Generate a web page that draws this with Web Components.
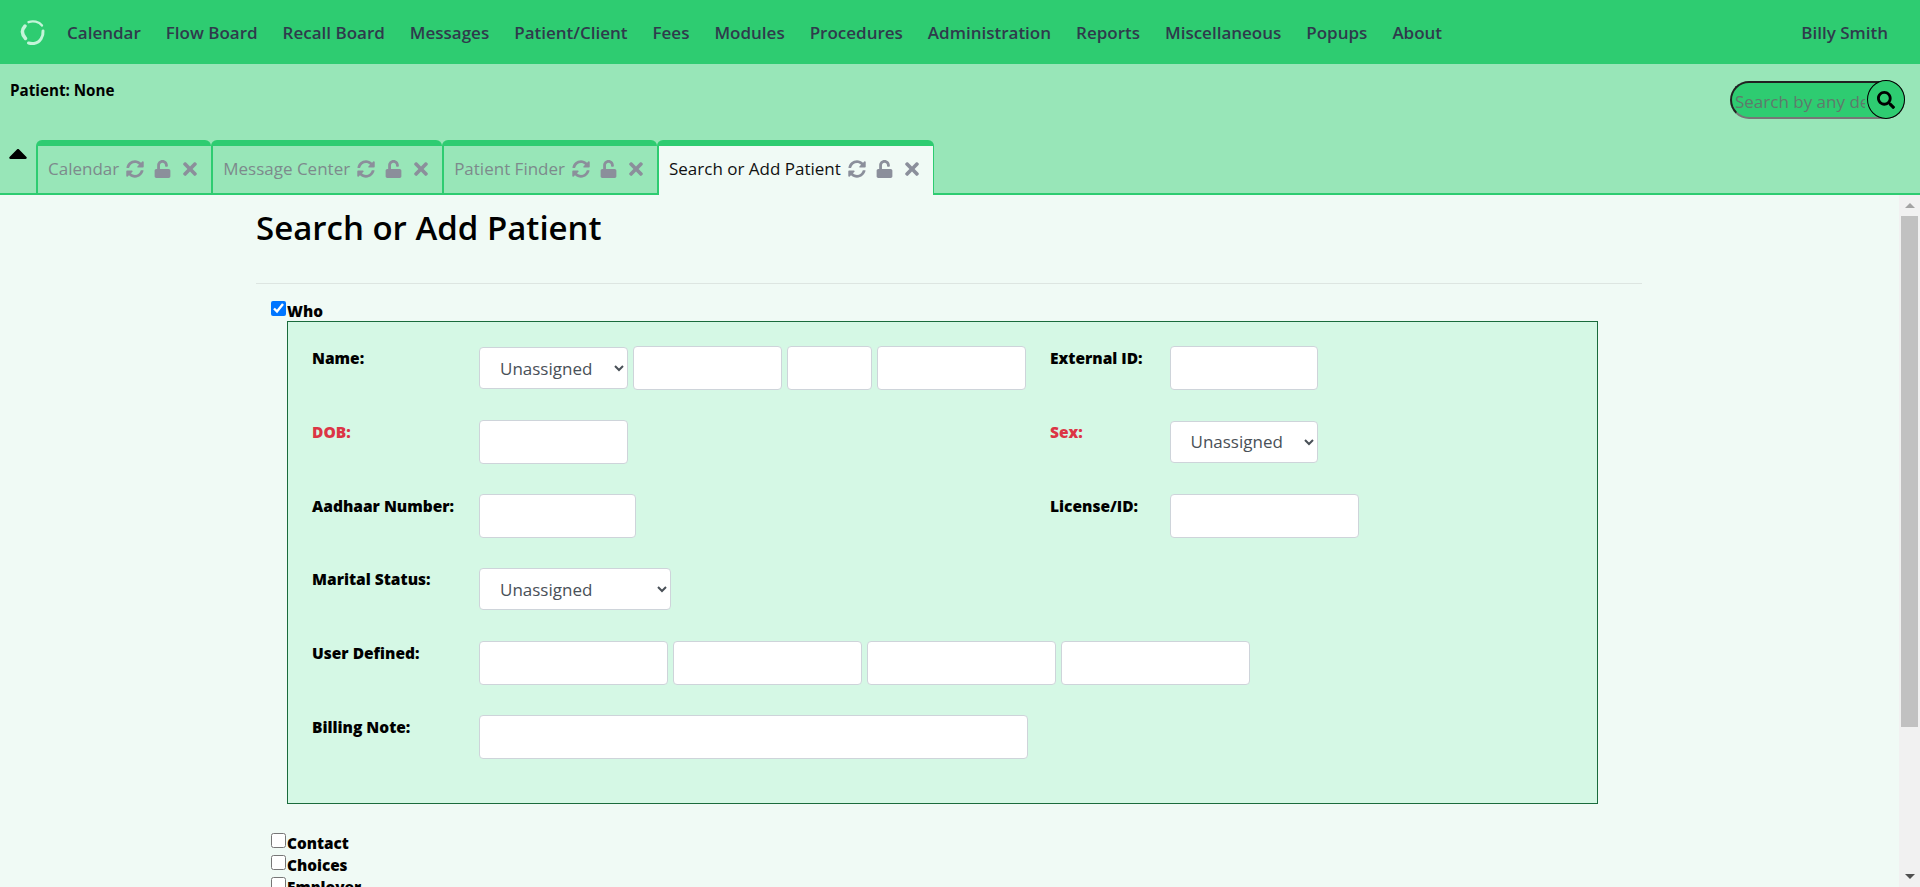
<!doctype html>
<html>
<head>
<meta charset="utf-8">
<title>Search or Add Patient</title>
<style>
  html, body { margin: 0; height: 100%; overflow: hidden; }
  body { font-family: "Open Sans", "Noto Sans", sans-serif; }
</style>
</head>
<body>
<emr-app></emr-app>

<script>
const ICONS = {
  sync: ['0 0 512 512', 'M370.72 133.28C339.458 104.008 298.888 87.962 255.848 88c-77.458.068-144.328 53.178-162.791 126.85-1.344 5.363-6.122 9.15-11.651 9.15H24.103c-7.498 0-13.194-6.807-11.807-14.176C33.933 94.924 134.813 8 256 8c66.448 0 126.791 26.136 171.315 68.685L463.03 40.97C478.149 25.851 504 36.559 504 57.941V192c0 13.255-10.745 24-24 24H345.941c-21.382 0-32.09-25.851-16.971-40.971l41.75-41.749zM32 296h134.059c21.382 0 32.09 25.851 16.971 40.971l-41.75 41.75c31.262 29.273 71.835 45.319 114.876 45.28 77.418-.07 144.315-53.144 162.787-126.849 1.344-5.363 6.122-9.15 11.651-9.15h57.304c7.498 0 13.194 6.807 11.807 14.176C478.067 417.076 377.187 504 256 504c-66.448 0-126.791-26.136-171.315-68.685L48.97 471.03C33.851 486.149 8 475.441 8 454.059V320c0-13.255 10.745-24 24-24z'],
  unlock: ['0 0 448 512', 'M400 256H152V152.9c0-39.6 31.7-72.5 71.3-72.9 40-.4 72.7 32.1 72.7 72v16c0 13.3 10.7 24 24 24h32c13.3 0 24-10.7 24-24v-16C376 68 307.5-.3 223.5 0 139.5.3 72 69.5 72 153.5V256H48c-26.5 0-48 21.5-48 48v160c0 26.5 21.5 48 48 48h352c26.5 0 48-21.5 48-48V304c0-26.5-21.5-48-48-48z'],
  times: ['0 0 352 512', 'M242.72 256l100.07-100.07c12.28-12.28 12.28-32.19 0-44.48l-22.24-22.24c-12.28-12.28-32.19-12.28-44.48 0L176 189.28 75.93 89.21c-12.28-12.28-32.19-12.28-44.48 0L9.21 111.45c-12.28 12.28-12.28 32.19 0 44.48L109.28 256 9.21 356.07c-12.28 12.28-12.28 32.19 0 44.48l22.24 22.24c12.28 12.28 32.2 12.28 44.48 0L176 322.72l100.07 100.07c12.28 12.28 32.2 12.28 44.48 0l22.24-22.24c12.28-12.28 12.28-32.19 0-44.48L242.72 256z'],
  search: ['0 0 512 512', 'M505 442.7L405.3 343c-4.5-4.5-10.6-7-17-7H372c27.6-35.3 44-79.7 44-128C416 93.1 322.9 0 208 0S0 93.1 0 208s93.1 208 208 208c48.3 0 92.7-16.4 128-44v16.3c0 6.4 2.5 12.5 7 17l99.7 99.7c9.4 9.4 24.6 9.4 33.9 0l28.3-28.3c9.4-9.4 9.4-24.6.1-34zM208 336c-70.7 0-128-57.2-128-128 0-70.7 57.2-128 128-128 70.7 0 128 57.2 128 128 0 70.7-57.2 128-128 128z'],
  caret: ['12 183 296 169', 'M288.662 352H31.338c-17.818 0-26.741-21.543-14.142-34.142l128.662-128.662c7.81-7.81 20.474-7.81 28.284 0l128.662 128.662c12.6 12.599 3.676 34.142-14.142 34.142z']
}

const icon = (name, w, h) => {
  const [box, d] = ICONS[name]
  return `<svg viewBox="${box}" width="${w}" height="${h}" fill="currentColor" aria-hidden="true"><path d="${d}"/></svg>`
}

class EmrNavbar extends HTMLElement {
  connectedCallback() {
    const items = ['Calendar', 'Flow Board', 'Recall Board', 'Messages', 'Patient/Client', 'Fees', 'Modules', 'Procedures', 'Administration', 'Reports', 'Miscellaneous', 'Popups', 'About']
    this.attachShadow({ mode: 'open' }).innerHTML = `
      <style>
        :host {
          display: flex;
          align-items: center;
          height: 64px;
          background: #2ecc71;
          color: #2f3b4c;
          font: 600 17px/24px "Open Sans", sans-serif;
          box-sizing: border-box;
          padding: 1px 32px 0 18px;
        }
        svg { display: block; flex: none; margin: -1px 21px 0 0; }
        nav { display: flex; gap: 25px; flex: 1; }
        span { white-space: nowrap; }
      </style>
      <svg width="28" height="28" viewBox="0 0 28 28" fill="none" stroke="#c4f4d9" stroke-linecap="round">
        <path d="M7 8Q1.5 14 7.5 20.5" stroke-width="3.4"/>
        <path d="M10.5 4.2C15 2.5 21 3.5 24 7.5" stroke-width="2.3"/>
        <path d="M25 13C25.5 18 22.5 24.5 16 25.4C14 25.7 12.3 25.5 10.5 25" stroke-width="3"/>
      </svg>
      <nav>${items.map(i => `<span>${i}</span>`).join('')}</nav>
      <span>Billy Smith</span>
    `
  }
}

class EmrSearch extends HTMLElement {
  connectedCallback() {
    this.attachShadow({ mode: 'open' }).innerHTML = `
      <style>
        :host { display: flex; position: relative; width: 175px; height: 39px; }
        input {
          width: 100%;
          height: 38px;
          margin: 1px 0 0;
          box-sizing: border-box;
          padding: 4px 38px 1px 3px;
          border: 2px inset #767676;
          border-radius: 19px;
          background: #2ecc71;
          font: 17px "Open Sans", sans-serif;
          outline: none;
        }
        input::placeholder { color: #5f7a6c; opacity: 1; }
        button {
          position: absolute;
          right: 0;
          top: 0;
          width: 38px;
          height: 39px;
          padding: 0;
          display: grid;
          place-items: center;
          border: 1px solid #000;
          border-radius: 50%;
          background: #2ecc71;
          color: #000;
        }
      </style>
      <input placeholder="Search by any demographics">
      <button type="button" aria-label="Search">${icon('search', 18, 18)}</button>
    `
  }
}

class EmrTab extends HTMLElement {
  connectedCallback() {
    const active = this.hasAttribute('active')
    this.attachShadow({ mode: 'open' }).innerHTML = `
      <style>
        :host {
          display: flex;
          align-items: center;
          box-sizing: border-box;
          height: 55px;
          margin-bottom: -2px;
          padding: 0 14px 4px 10px;
          border-top: 6px solid #2ecc71;
          border-left: 2px solid #2ecc71;
          border-radius: 6px 6px 0 0;
          font: 17px/24px "Open Sans", sans-serif;
          white-space: nowrap;
          color: ${active ? '#111' : '#7d8a8c'};
          background: ${active ? '#f0faf5' : 'transparent'};
          ${active ? 'border-right: 1px solid #2ecc71;' : ''}
        }
        .tools { display: flex; align-items: center; color: #8b8f9b; margin-left: 7px; }
        svg { display: block; }
        .lock { margin-left: 10px; }
        .close { margin-left: 12px; }
      </style>
      <slot></slot>
      <div class="tools">
        ${icon('sync', 18, 18)}
        <span class="lock">${icon('unlock', 17, 18)}</span>
        <span class="close">${icon('times', 14, 20)}</span>
      </div>
    `
  }
}

class EmrTabbar extends HTMLElement {
  connectedCallback() {
    this.attachShadow({ mode: 'open' }).innerHTML = `
      <style>
        :host {
          display: block;
          height: 131px;
          box-sizing: border-box;
          background: #98e6b8;
          border-bottom: 2px solid #2ecc71;
          position: relative;
        }
        .top {
          display: flex;
          justify-content: space-between;
          height: 76px;
          padding: 16px 15px 0 10px;
          box-sizing: border-box;
        }
        .patient { font: 700 15.2px/21px "Open Sans", sans-serif; color: #000; }
        .tabs { display: flex; align-items: flex-end; height: 53px; padding-left: 9px; }
        .caret { align-self: flex-start; margin: 9px 9px 0 0; color: #000; line-height: 0; }
      </style>
      <div class="top">
        <div class="patient">Patient: None</div>
        <emr-search></emr-search>
      </div>
      <div class="tabs">
        <div class="caret">${icon('caret', 18, 10)}</div>
        <slot></slot>
      </div>
    `
  }
}

class EmrField extends HTMLElement {
  connectedCallback() {
    const required = this.hasAttribute('required')
    this.attachShadow({ mode: 'open' }).innerHTML = `
      <style>
        :host { display: block; font: 800 15.5px/21px "Open Sans", sans-serif; color: ${required ? '#dc3545' : '#000'}; padding-top: 2px; }
      </style>
      <slot></slot>
    `
  }
}

class EmrInput extends HTMLElement {
  connectedCallback() {
    const width = this.getAttribute('width') || 148
    this.attachShadow({ mode: 'open' }).innerHTML = `
      <style>
        :host { display: block; flex: none; width: ${width}px; }
        input {
          display: block;
          width: 100%;
          height: 44px;
          box-sizing: border-box;
          border: 1px solid #ced4da;
          border-radius: 4px;
          background: #fff;
          outline: none;
        }
      </style>
      <input type="text">
    `
  }
}

class EmrSelect extends HTMLElement {
  connectedCallback() {
    const width = this.getAttribute('width') || 149
    this.attachShadow({ mode: 'open' }).innerHTML = `
      <style>
        :host { display: block; flex: none; width: ${width}px; padding-top: 1px; }
        select {
          display: block;
          width: 100%;
          height: 42px;
          box-sizing: border-box;
          padding: 0 12px 0 16px;
          border: 1px solid #ced4da;
          border-radius: 4px;
          background: #fff;
          color: #495057;
          font: 17px "Open Sans", sans-serif;
          outline: none;
        }
      </style>
      <select><option>Unassigned</option></select>
    `
  }
}

class EmrSection extends HTMLElement {
  connectedCallback() {
    const open = this.hasAttribute('open')
    this.attachShadow({ mode: 'open' }).innerHTML = `
      <style>
        :host { display: block; padding-left: 15px; }
        .head { display: flex; align-items: flex-start; height: ${open ? 20 : 22}px; font: 800 15.3px/22px "Open Sans", sans-serif; color: #000; }
        input { width: 15px; height: 15px; margin: 0 1px 0 0; flex: none; accent-color: #0075ff; }
        .title { margin-top: -1px; }
      </style>
      <div class="head">
        <input type="checkbox" ${open ? 'checked' : ''}>
        <span class="title">${this.getAttribute('title')}</span>
      </div>
      <slot></slot>
    `
    this.removeAttribute('title')
  }
}

class EmrScrollbar extends HTMLElement {
  connectedCallback() {
    this.attachShadow({ mode: 'open' }).innerHTML = `
      <style>
        :host { display: flex; flex-direction: column; flex: none; width: 21px; background: #f1f1f1; }
        .btn { height: 21px; flex: none; display: grid; place-items: center; }
        .btn i { width: 0; height: 0; border: 5px solid transparent; border-top: 0; border-bottom: 5px solid #a3a3a3; }
        .btn.down i { border-bottom: 0; border-top: 5px solid #505050; }
        .track { flex: 1; padding: 0 2px; }
        .thumb { height: 511px; background: #c1c1c1; }
      </style>
      <div class="btn"><i></i></div>
      <div class="track"><div class="thumb"></div></div>
      <div class="btn down"><i></i></div>
    `
  }
}

class EmrForm extends HTMLElement {
  connectedCallback() {
    this.attachShadow({ mode: 'open' }).innerHTML = `
      <style>
        :host { display: flex; flex: 1; min-height: 0; background: #f0faf5; }
        .page { flex: 1; min-width: 0; overflow: hidden; padding: 0 257px 0 256px; box-sizing: border-box; }
        h1 { margin: 0; padding-top: 10px; height: 88px; box-sizing: border-box; font: 600 33px/46px "Open Sans", sans-serif; color: #000; }
        hr { margin: 0 0 17px; border: 0; border-top: 1px solid #dde5e1; }
        .who {
          margin: 0 44px 29px 16px;
          height: 483px;
          box-sizing: border-box;
          border: 1px solid #1a6b3c;
          background: #d5f8e5;
          padding: 24px 0 0 24px;
          display: grid;
          grid-template-columns: 167px 571px 119.5px 1fr;
          grid-auto-rows: 44px;
          row-gap: 29.8px;
        }
        .group { display: flex; gap: 5px; }
        .wide { grid-column: 2 / 5; }
      </style>
      <div class="page">
        <h1>Search or Add Patient</h1>
        <hr>
        <emr-section title="Who" open>
          <div class="who">
            <emr-field>Name:</emr-field>
            <div class="group">
              <emr-select width="149"></emr-select>
              <emr-input width="149"></emr-input>
              <emr-input width="85"></emr-input>
              <emr-input width="149"></emr-input>
            </div>
            <emr-field>External ID:</emr-field>
            <div class="group"><emr-input width="148"></emr-input></div>

            <emr-field required>DOB:</emr-field>
            <div class="group"><emr-input width="149"></emr-input></div>
            <emr-field required>Sex:</emr-field>
            <div class="group"><emr-select width="148"></emr-select></div>

            <emr-field>Aadhaar Number:</emr-field>
            <div class="group"><emr-input width="157"></emr-input></div>
            <emr-field>License/ID:</emr-field>
            <div class="group"><emr-input width="189"></emr-input></div>

            <emr-field>Marital Status:</emr-field>
            <div class="group wide"><emr-select width="192"></emr-select></div>

            <emr-field>User Defined:</emr-field>
            <div class="group wide">
              <emr-input width="189"></emr-input>
              <emr-input width="189"></emr-input>
              <emr-input width="189"></emr-input>
              <emr-input width="189"></emr-input>
            </div>

            <emr-field>Billing Note:</emr-field>
            <div class="group wide"><emr-input width="549"></emr-input></div>
          </div>
        </emr-section>
        <emr-section title="Contact"></emr-section>
        <emr-section title="Choices"></emr-section>
        <emr-section title="Employer"></emr-section>
      </div>
      <emr-scrollbar></emr-scrollbar>
    `
  }
}

class EmrApp extends HTMLElement {
  connectedCallback() {
    this.attachShadow({ mode: 'open' }).innerHTML = `
      <style>
        :host { display: flex; flex-direction: column; height: 887px; overflow: hidden; }
      </style>
      <emr-navbar></emr-navbar>
      <emr-tabbar>
        <emr-tab>Calendar</emr-tab>
        <emr-tab>Message Center</emr-tab>
        <emr-tab>Patient Finder</emr-tab>
        <emr-tab active>Search or Add Patient</emr-tab>
      </emr-tabbar>
      <emr-form></emr-form>
    `
  }
}

customElements.define('emr-navbar', EmrNavbar)
customElements.define('emr-search', EmrSearch)
customElements.define('emr-tab', EmrTab)
customElements.define('emr-tabbar', EmrTabbar)
customElements.define('emr-field', EmrField)
customElements.define('emr-input', EmrInput)
customElements.define('emr-select', EmrSelect)
customElements.define('emr-section', EmrSection)
customElements.define('emr-scrollbar', EmrScrollbar)
customElements.define('emr-form', EmrForm)
customElements.define('emr-app', EmrApp)
</script>
</body>
</html>
